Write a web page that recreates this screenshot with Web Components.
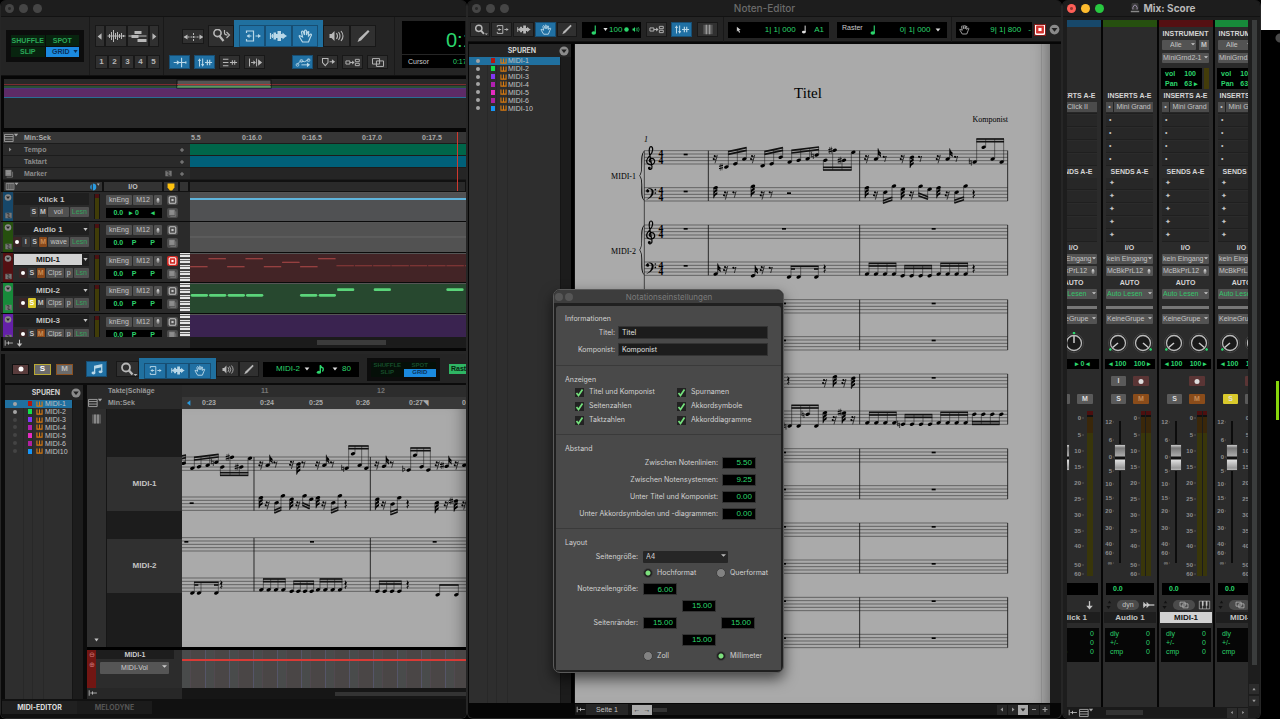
<!DOCTYPE html>
<html lang="de">
<head>
<meta charset="utf-8">
<title>Mix: Score</title>
<style>
  html, body {
    margin: 0;
    height: 100%;
    background: #000;
    overflow: hidden;
  }
  body {
    font: 7px/10px "Liberation Sans", Arial, sans-serif;
    color: #c4c4c4;
  }
</style>
</head>
<body>
<daw-desktop></daw-desktop>

<script>
// ---------- shared styles and icons ----------
const base = `
  * { box-sizing: border-box; }
  button, input, select { font: inherit; color: inherit; margin: 0; padding: 0; border: 0; border-radius: 0; outline: 0; }
  button { display: flex; align-items: center; justify-content: center; background: none; white-space: nowrap; overflow: hidden; }
  svg { display: block; flex: none; }
  .row { display: flex; }
  .grow { flex: 1; min-width: 0; }
`;

const icons = {
  left: `<path d="M12 3v8L7 7z" fill="currentColor"/>`,
  right: `<path d="M8 3v8l5-4z" fill="currentColor"/>`,
  mag: `<circle cx="8.500" cy="5.500" r="4" fill="none" stroke="currentColor" stroke-width="1.800"/><path d="M11 8l4 4.500" stroke="currentColor" stroke-width="2.400"/><path d="M16 12h4l-2 2z" fill="currentColor"/>`,
  magArrow: `<circle cx="6" cy="4" r="3.600" fill="none" stroke="currentColor" stroke-width="1.600"/><path d="M8 7l4 5" stroke="currentColor" stroke-width="2.200"/><path d="M13 1v3q0 2 3 2M15 3l3 3-3 3" fill="none" stroke="currentColor" stroke-width="1.200"/>`,
  trim: `<path d="M4 4V2h7v10H4v-2M5 7h4M13 7h3" fill="none" stroke="currentColor" stroke-width="1.200"/><path d="M7 5L4 7l3 2zM15.500 5l3 2-3 2z" fill="currentColor"/>`,
  select: `<path d="M2 4v6M4 5v4M2 7h16" stroke="currentColor" stroke-width="1.200"/><path d="M5 3.500h2.500V5H9V2h3.500v3H14V3.500L18 7l-4 3.500V9h-1.500v3H9V9H7.500v1.500H5z" fill="currentColor"/>`,
  hand: `<path d="M7 13L4 8q-1-2 1-1l2 1-1-5q1-2 2 0l1 3V2q1-2 2 0v4l1-3q2-1 1 1v3l2-2q2 0 0 3l-2 5z" fill="none" stroke="currentColor" stroke-width="1.200"/>`,
  speaker: `<path d="M3 5h2l3-3v10L5 9H3z" fill="currentColor"/><path d="M10 4q2 3 0 6M12 3q3 4 0 8M14.500 2q4 5 0 10" fill="none" stroke="currentColor" stroke-width="1.100"/>`,
  pencil: `<path d="M4 13l1.500-3.500 9-8.500 1.500 1.500-8.500 9z" fill="currentColor"/>`,
  spread: `<path d="M1 7h18M10 3v8" stroke="currentColor" stroke-dasharray="2 1"/><path d="M4 4.500v5L0 7zM16 4.500v5L20 7z" fill="currentColor"/>`,
  wave: `<path d="M1 7h18M3 5v4M5 3v8M7 1v12M9 4v6M11 3v8M13 5v4M15 4v6M17 6v2" stroke="currentColor"/>`,
  blocks: `<path d="M6 2h7v3H6zM3 6h7v3H3zM9 10h9v3H9z" fill="currentColor"/><path d="M0 7h18" stroke="currentColor"/>`,
  tab: `<path d="M2 7h16M12 1v12" stroke="currentColor" stroke-width="1.400"/><path d="M6 4l4 3-4 3zM18 5v4l-3-2z" fill="currentColor"/>`,
  link: `<path d="M3 12V3M7 2v9M10 7h9" stroke="currentColor" stroke-width="1.300"/><path d="M1 5l2-3.500L5 5zM5 9l2 3.500L9 9z" fill="currentColor"/><path d="M13 3.500v7M16 3.500v7" stroke="currentColor" stroke-width="1.500"/>`,
  lines: `<path d="M1 3h7M1 7h7M1 11h7M10 7h9M13 4v6M16 4v6" stroke="currentColor" stroke-width="1.300"/>`,
  insert: `<path d="M3 2v10M5 7h5M12 2v10" stroke="currentColor" stroke-width="1.200"/><path d="M8 4l3 3-3 3zM14 3l5 4-5 4z" fill="currentColor"/>`,
  auto: `<path d="M2 10l5-5 5 1 6-3M8 10h8" fill="none" stroke="currentColor" stroke-width="1.200"/><circle cx="3" cy="10" r="1.800" fill="none" stroke="currentColor"/><circle cx="8" cy="5" r="1.800" fill="none" stroke="currentColor"/><circle cx="17" cy="4" r="1.800" fill="none" stroke="currentColor"/><path d="M15 7l4 3-4 3z" fill="currentColor"/>`,
  marker: `<path d="M3 2h7v5l-3.500 4L3 7zM12 6h5" fill="none" stroke="currentColor" stroke-width="1.300"/><path d="M15 3l4 3-4 3z" fill="currentColor"/>`,
  shield: `<path d="M4 1h12v7l-4 5H8L4 8z" fill="currentColor"/>`,
  mirror: `<path d="M1 5h5v4H1zM6 7h5M13 3h5v3h-5zM13 8h5v3h-5z" fill="none" stroke="currentColor" stroke-width="1.200"/><path d="M9 4.500L12 7l-3 2.500z" fill="currentColor"/>`,
  layer: `<path d="M3 2h9v7H3zM8 5h9v7H8z" fill="none" stroke="currentColor" stroke-width="1.200"/>`,
  page: `<path d="M4 1h12v12H4z" fill="#555"/><path d="M8 1v12M12 1v12" stroke="#999" stroke-width="2"/>`,
  note: `<path d="M7 11V3l9-2v9" fill="none" stroke="currentColor" stroke-width="1.600"/><ellipse cx="5.500" cy="11.500" rx="2.500" ry="1.800" fill="currentColor"/><ellipse cx="14.500" cy="10" rx="2.500" ry="1.800" fill="currentColor"/><path d="M7 3l9-2v3L7 6z" fill="currentColor"/>`,
  quarter: `<path d="M11 11V1" stroke="currentColor" stroke-width="1.500"/><ellipse cx="9" cy="11" rx="3" ry="2.200" fill="currentColor"/>`,
  eighth: `<path d="M9 11V1q1 3 4 4 1 3-1 5" fill="none" stroke="currentColor" stroke-width="2"/><ellipse cx="7" cy="11" rx="3" ry="2.200" fill="currentColor"/>`,
  cursor: `<path d="M7 2v9l2-2 2 4 2-1-2-4h3z" fill="currentColor"/>`,
  down: `<path d="M4 3h12l-6 8z" fill="currentColor"/>`,
  up: `<path d="M6 10h8l-4-6z" fill="currentColor"/>`,
  record: `<circle cx="10" cy="7" r="5" fill="currentColor"/>`,
  target: `<rect x="4" y="1" width="12" height="12" rx="2" fill="none" stroke="currentColor" stroke-width="2"/><rect x="8" y="5" width="4" height="4" fill="currentColor"/>`,
  stack: `<rect x="4" y="1" width="10" height="10" fill="#888"/><path d="M6 13h10V4M6 4h6M6 7h6" fill="none" stroke="#999"/>`,
  menu: `<path d="M1 2h12v10H1zM1 5h12M1 8.500h12" fill="none" stroke="#999" stroke-width="1.400"/><path d="M14 1h6l-3 4z" fill="#aaa"/>`,
  cols: `<path d="M1 2h12v10H1zM4 2v10M7 2v10M10 2v10" fill="none" stroke="#999" stroke-width="1.400"/><path d="M14 1h6l-3 4z" fill="#aaa"/>`,
  clock: `<path d="M8 1a6 6 0 0 1 0 12V7zM6 2a6 6 0 0 0 0 10z" fill="#2a9be0"/><path d="M15 1h5l-2.500 4z" fill="#aaa"/>`,
  circle: `<circle cx="10" cy="7" r="6.500" fill="#8a8a8a"/><path d="M6 5h8l-4 5z" fill="#222"/>`,
  keys: `<path d="M4 1v11h12V1M10 1v11" fill="none" stroke="currentColor" stroke-width="2.600"/>`,
  piano: `<path d="M2 1h16v12H2zM7 1v12M13 1v12" fill="none" stroke="currentColor"/><path d="M6 1h2.500v7H6zM12 1h2.500v7H12z" fill="currentColor"/>`,
  arrowDown: `<path d="M10 1v10" stroke="currentColor" stroke-width="2"/><path d="M5 8h10l-5 6z" fill="currentColor"/>`,
  audio: `<path d="M2 2v10l5-5zM7 2v10l5-5z" fill="currentColor"/><path d="M2 7h17" stroke="currentColor" stroke-width="2"/>`,
  pin: `<circle cx="10" cy="4" r="3" fill="currentColor"/><path d="M10 4v9M6 8h8" stroke="currentColor" stroke-width="2"/>`,
  pinned: `<path d="M4 2v10M6 7h12M10 4v6" stroke="currentColor" stroke-width="1.500"/>`,
  plus: `<path d="M5 7h10M10 2v10" stroke="currentColor" stroke-width="2.400"/>`,
  minus: `<path d="M6 7h8" stroke="currentColor" stroke-width="2"/>`,
  fold: `<path d="M3 1h14v12H3z" fill="#777"/><path d="M6 3h5v4M14 11H9V7" fill="none" stroke="#333" stroke-width="2"/>`,
  app: `<rect x="5" y="0" width="10" height="10" rx="2" fill="#3a3a3a"/><path d="M7 9V6l2-3h2l2 3v3" fill="none" stroke="#a99bb8" stroke-width="1.300"/><path d="M4 12h12" stroke="#888" stroke-width="2"/>`
};

function icon(name, w = 14, h = 10, color = "currentColor") {
  return `<svg width="${w}" height="${h}" viewBox="0 0 20 14" style="color:${color}" aria-hidden="true">${icons[name]}</svg>`;
}

// ---------- window frame ----------
class AppWindow extends HTMLElement {
  constructor() {
    super();
    const el = this.attachShadow({ mode: "open" });
    const live = this.hasAttribute("live");
    const colors = live ? ["#fe5f57", "#febc2e", "#28c840"] : ["#454545", "#454545", "#454545"];
    const badge = live ? icon("app", 14, 10) : "";
    el.innerHTML = `
      <style>${base}
        :host { display: flex; flex-direction: column; min-width: 0; min-height: 0; overflow: hidden;
          background: #060606; border: solid #262626; border-width: 0 1px 1px; border-radius: 6px; }
        header { display: grid; grid-template-columns: 1fr auto 1fr; align-items: center; flex: none;
          height: var(--bar, 17px); background: #1d1d1d; border-bottom: 1px solid #121212;
          font: 500 10px/14px Inter, sans-serif; color: ${live ? "#b8b8b8" : "#6b6b6b"}; }
        .title { display: flex; align-items: center; gap: 2px; ${live ? "font-weight:700" : ""} }
        .dots { display: flex; gap: 5px; padding-left: 4px; }
        .dots i { width: 9px; height: 9px; border-radius: 50%; }
        .dots i:first-child { background-image: radial-gradient(#0006 1px, transparent 2px); }
      </style>
      <header><span class="dots">${colors.map((c) => `<i style="background-color:${c}"></i>`).join("")}</span>
      <span class="title">${badge}${this.getAttribute("heading") || ""}</span></header>
      <slot></slot>`;
  }
}
customElements.define("app-window", AppWindow);

// ---------- toolbar button ----------
class ToolButton extends HTMLElement {
  constructor() {
    super();
    const el = this.attachShadow({ mode: "open" });
    const name = this.getAttribute("icon");
    const size = this.hasAttribute("big") ? [21, 14] : [16, 11];
    el.innerHTML = `
      <style>${base}
        :host { display: flex; flex: none; width: 21px; }
        button { width: 100%; height: 100%; background: #303030; border: 1px solid #181818; color: #b8b8b8;
          font-weight: 700; font-size: 8px; }
        :host([on]) button { background: #2070a3; border-color: #174e73; color: #b9d8e8; }
        :host([red]) button { background: #d3332f; border-color: #801c1a; color: #fff; }
      </style>
      <button type="button" ${name ? `aria-label="${name}"` : ""}>${name ? icon(name, ...size) : "<slot></slot>"}</button>`;
  }
}
customElements.define("tool-button", ToolButton);

// ---------- shuffle / slip / spot / grid ----------
class ModeGrid extends HTMLElement {
  constructor() {
    super();
    const el = this.attachShadow({ mode: "open" });
    el.innerHTML = `
      <style>${base}
        :host { display: grid; grid-template-columns: 1fr 1fr; gap: 1px; padding: 5px; background: #0c0c0c; width: 78px; height: 32px; flex: none; }
        button { background: #08240f; color: #2ba758; font: 700 7px/9px "Liberation Sans", sans-serif; }
        .on { background: #1b8ae0; color: #0b2f57; gap: 2px; padding-left: 6px; }
        :host([dim]) { width: 73px; height: 23px; padding: 4px; gap: 0; }
        :host([dim]) button { font-size: 6px; line-height: 7px; background: #050f08; color: #174d2a; }
        :host([dim]) .on { background: #1b8ae0; color: #0b2f57; padding: 0; }
      </style>
      <button>SHUFFLE</button><button>SPOT</button><button>SLIP</button>
      <button class="on">GRID${this.hasAttribute("dim") ? "" : icon("down", 7, 5)}</button>`;
  }
}
customElements.define("mode-grid", ModeGrid);

// ---------- list of tracks ----------
class TrackList extends HTMLElement {
  constructor() {
    super();
    const el = this.attachShadow({ mode: "open" });
    const colors = ["#b3160e", "#13e04a", "#8237f5", "#b020b0", "#e62cc0", "#b020a0", "#1795f5"];
    const last = this.getAttribute("last");
    const shown = Number(this.getAttribute("shown"));
    const rows = colors.map((c, i) => `
      <li class="${i === 0 ? "on" : ""}"><i class="dot" style="${i < shown ? "" : "background:#444"}"></i>
      <i class="swatch" style="background:${c}"></i>${icon("keys", 9, 6, "#d87a10")}<span>${i < 6 ? `MIDI-${i + 1}` : last}</span></li>`).join("");
    el.innerHTML = `
      <style>${base}
        :host { display: grid; grid-template-columns: 1fr 11px; grid-template-rows: auto 1fr; background: #2e2e2e; min-height: 0; }
        header { grid-column: 1 / 3; display: flex; align-items: center; justify-content: flex-end; height: var(--head, 15px);
          background: #242424; color: #d0d0d0; font: 700 7px/10px Inter, sans-serif; }
        header span { flex: 1; text-align: center; padding-left: 18px; }
        ul { list-style: none; margin: 0; padding: 0; height: 55px; display: grid; grid-auto-rows: 1fr; }
        .list { background: linear-gradient(90deg, transparent 18px, #282828 18px 19px, transparent 19px 27px, #282828 27px 28px, transparent 28px 38px, #282828 38px 39px, transparent 39px); }
        li { display: grid; grid-template-columns: var(--cols, 20px 9px 9px 1fr); align-items: center; justify-items: center; font-size: 7px; line-height: 7px; }
        li span { justify-self: start; }
        li.on { background: #20709f; }
        .dot { width: 4px; height: 4px; border-radius: 50%; background: #a5a5a5; }
        .swatch { width: 4px; height: 5px; }
        .bar { background: #1c1c1c; border-left: 1px solid #151515; }
      </style>
      <header><span>SPUREN</span>${icon("circle", 14, 10)}</header>
      <div class="list"><ul>${rows}</ul></div><div class="bar"></div>`;
  }
}
customElements.define("track-list", TrackList);

// ---------- notation ----------
// All score coordinates are in thirds of a pixel.
const head = (x, y) => `<ellipse cx="${x}" cy="${y}" rx="7" ry="4.800" transform="rotate(-18 ${x} ${y})"/>`;
const line = (x1, y1, x2, y2, w = 2) => `<path d="M${x1} ${y1}L${x2} ${y2}" stroke="#111" stroke-width="${w}"/>`;

function beam(points, y1, y2, count = 2) {
  const up = y1 < points[0][1];
  const side = up ? 6 : -6;
  const x1 = points[0][0] + side;
  const x2 = points[points.length - 1][0] + side;
  let out = "";
  for (const [x, y] of points) {
    const end = y1 + ((x + side - x1) / (x2 - x1)) * (y2 - y1);
    out += head(x, y) + line(x + side, y, x + side, end, 1.5);
  }
  for (let i = 0; i < count; i++) {
    const d = i * (up ? 8 : -8);
    out += line(x1 - 1, y1 + d, x2 + 1, y2 + d, 5);
  }
  return out;
}
const run = (x, y, top, step = 27, n = 4) =>
  beam(Array.from({ length: n }, (_, i) => [x + i * step, y]), top, top);

const up = (x, y) => head(x, y) + line(x + 6, y, x + 6, y - 32) +
  `<path d="M${x + 6} ${y - 32}q2 8 9 13q-1 3 0 6q-7-5-9-6zM${x + 6} ${y - 22}q2 6 9 11l0 6q-6-7-9-7z"/>`;
const dn = (x, y) => head(x, y) + line(x - 6, y, x - 6, y + 32) +
  `<path d="M${x - 6} ${y + 32}q3-9 11-12v-7q-8 5-11 8zM${x - 6} ${y + 21}q3-8 11-11v-7q-8 4-11 8z"/>`;
const r16 = (x, y) => `<circle cx="${x - 3}" cy="${y - 7}" r="3"/><circle cx="${x - 6}" cy="${y + 2}" r="3"/>` +
  `<path d="M${x - 4} ${y - 5}q6 1 9-4L${x - 2} ${y + 15}M${x - 6} ${y + 4}q6 1 8-3" fill="none" stroke="#000" stroke-width="2"/>`;
const r8 = (x, y) => `<circle cx="${x - 3}" cy="${y - 5}" r="3"/><path d="M${x - 3} ${y - 3}q5 1 8-4L${x} ${y + 11}" fill="none" stroke="#000" stroke-width="2"/>`;
const r4 = (x, y) => `<path d="M${x - 3} ${y - 15}l7 9q-6 6 1 12-7-2-4 8-9-8 0-10l-5-7q5-5 1-12z"/>`;
const rest = (x, y) => `<rect x="${x - 6}" y="${y - 3}" width="12" height="5"/>`;
const sharp = (x, y) => `<path d="M${x - 2} ${y - 10}v21M${x + 3} ${y - 11}v21" stroke="#000" stroke-width="1.500"/><path d="M${x - 6} ${y - 2}l12-3M${x - 6} ${y + 5}l12-3" stroke="#000" stroke-width="3"/>`;
const nat = (x, y) => `<path d="M${x - 3} ${y - 11}v16l6-2M${x + 3} ${y + 11}v-15l-6 2" fill="none" stroke="#000" stroke-width="2"/>`;
const flat = (x, y) => `<path d="M${x - 4} ${y - 13}v18q9-4 7-9-3-3-7 1" fill="none" stroke="#000" stroke-width="2"/>`;
const staff = (x1, x2, y) => [0, 1, 2, 3, 4].map((i) => line(x1, y + i * 10, x2, y + i * 10, 1.4)).join("");
const dotted = (a, b, c, y, top) => beam([[a, y], [b, y], [c, y]], top, top, 1) +
  line(a + 6, top + 8, a + 18, top + 8, 5) + line(c - 7, top + 8, c + 6, top + 8, 5);

const treble = (x, y) => `<path transform="translate(${x} ${y})" fill="none" stroke="#000" stroke-width="3.600" stroke-linecap="round"
  d="M0 14c-7-1-7-11 1-12 10-1 13 11 7 16-8 7-22 2-21-9 1-12 18-17 18-33 0-5-2-9-5-9-5 0-6 10-5 17l8 43c1 9-9 11-10 5"/><circle cx="${x - 5}" cy="${y + 31}" r="4"/>`;
const bass = (x, y) => `<path transform="translate(${x} ${y})" d="M-13 0c0-9 22-12 22 4 0 13-13 20-23 24 10-7 17-14 17-24 0-12-11-10-13-5z"/><circle cx="${x - 9}" cy="${y + 1}" r="4.500"/><circle cx="${x + 14}" cy="${y - 3}" r="2.500"/><circle cx="${x + 14}" cy="${y + 7}" r="2.500"/>`;
const brace = (x, y) => `<path transform="translate(${x} ${y})" d="M13 0c-18 14-1 56-15 75 14 19-3 61 15 75-12-17 0-59-13-75C12 59 1 17 13 0z"/>`;
const time = (x, y) => `<text x="${x}" y="${y + 20}" class="time">4</text><text x="${x}" y="${y + 40}" class="time">4</text>`;

const passages = {
  page() {
    let out = line(283, 92, 283, 1584);
    for (let i = 0; i < 7; i++) {
      const y = Math.round(92 + i * 223.4);
      out += staff(283, 1373, y) + staff(283, 1373, y + 111);
      for (const x of [475, 929, 1373]) out += line(x, y, x, y + 151, 2.5);
      out += brace(270, y) + treble(303, y + 21) + bass(302, y + 120);
      if (i < 2) out += time(333, y) + time(333, y + 111);
      out += rest(407, y + 12) + rest(407, y + 123);
      if (i !== 0 && i !== 3) out += rest(702, y + 12) + rest(1151, y + 12);
      if (i > 1 && i !== 3) out += rest(702, y + 123) + rest(1151, y + 123);
    }
    out += r16(497, 115) + sharp(513, 141) + beam([[529, 141], [556, 131], [583, 117]], 95, 83);
    out += r16(609, 115) + beam([[638, 137], [665, 131], [692, 112]], 95, 83);
    out += beam([[719, 126], [746, 121], [773, 116], [800, 105]], 91, 81) + nat(787, 106);
    out += beam([[826, 121], [854, 91], [882, 121], [910, 97]], 150, 150) + sharp(841, 91) + sharp(869, 121);
    out += r16(951, 115) + up(978, 117) + r8(1004, 115) + r16(1058, 115) + dn(1086, 112) + r8(1110, 115);
    out += r16(1166, 115) + up(1193, 117) + r8(1218, 115) + nat(1261, 126);
    out += beam([[1274, 126], [1301, 82], [1328, 117], [1355, 126]], 57, 57);
    out += dn(497, 203) + r16(528, 224) + r8(553, 222) + dn(609, 199) + r16(638, 224) + r8(662, 222) + rest(717, 220);
    out += dn(951, 203) + r16(978, 224) + beam([[1006, 217], [1032, 198]], 250, 240) + dn(1059, 208) + r16(1086, 224);
    out += beam([[1112, 199], [1139, 208]], 227, 238) + dn(1166, 203) + r16(1193, 224) + beam([[1220, 217], [1247, 198]], 249, 239) + r4(1271, 222);
    out += up(497, 462) + r16(528, 448) + r8(553, 448) + up(609, 467) + r16(638, 448) + r8(662, 448);
    out += dotted(717, 746, 799, 471, 439) + r4(824, 446);
    out += run(951, 462, 430) + run(1058, 467, 437) + run(1166, 462, 430) + r4(1271, 446);
    // fourth system pair
    out += `<g transform="translate(690 720)">` + r4(25, 62) + r16(135, 67) + dn(165, 50) + r16(193, 67) + dn(220, 55) + rest(461, 54);
    out += nat(15, 198) + beam([[29, 198], [56, 198], [83, 163], [109, 198]], 136, 136) + nat(69, 163);
    out += dn(135, 158) + r16(164, 178) + sharp(179, 157) + dn(192, 159) + r16(220, 178);
    out += run(262, 188, 157) + nat(356, 193) + run(369, 193, 164) + run(476, 188, 157) + run(583, 163, 193) + `</g>`;
    return `<path d="M466.500 0v2000" stroke="#8c8c8c"/><g transform="translate(-25 76) scale(.33333)">${out}</g>
      <text x="233" y="54" text-anchor="middle" font-size="15">Titel</text>
      <text x="433" y="78" text-anchor="end" font-size="8">Komponist</text>
      <text x="69" y="98" font-size="8" font-style="italic">1</text>
      <text x="61" y="135" text-anchor="end" font-size="8">MIDI-1</text>
      <text x="61" y="210" text-anchor="end" font-size="8">MIDI-2</text>`;
  },
  strip() {
    let out = "";
    for (const y of [327, 447, 569, 690]) out += staff(540, 3000, y);
    for (const x of [762, 1111]) out += line(x, 327, x, 488, 2.5) + line(x, 570, x, 730, 2.5);
    out += head(551, 346) + line(556, 346, 556, 320) + line(540, 325, 558, 321, 5) + line(540, 333, 558, 329, 5);
    out += beam([[577, 361], [597, 356], [623, 352], [649, 343]], 328, 319) + nat(637, 343);
    out += beam([[667, 357], [696, 328], [724, 357], [750, 331]], 382, 382) + sharp(683, 328) + sharp(710, 357);
    out += r16(784, 350) + up(803, 352) + r8(826, 348) + r16(876, 348) + dn(896, 348) + r8(910, 348);
    out += r16(954, 350) + up(973, 352) + r8(996, 348) + nat(1028, 361) + beam([[1040, 361], [1059, 317], [1079, 352], [1099, 361]], 294, 294);
    out += r16(1132, 350) + up(1152, 355) + r8(1175, 348) + flat(1212, 366) + beam([[1226, 366], [1245, 322], [1265, 356], [1285, 366]], 300, 300);
    out += r16(1313, 350) + sharp(1326, 352) + up(1340, 355) + r16(1370, 350) + head(1393, 352);
    out += rest(575, 466) + dn(783, 449) + r16(803, 470) + beam([[830, 464], [849, 443]], 495, 486) + dn(875, 454) + r16(895, 470);
    out += beam([[914, 443], [934, 454]], 472, 482) + dn(954, 449) + r16(973, 470) + beam([[1000, 464], [1020, 443]], 495, 486) + r4(1037, 468);
    out += dn(1132, 454) + r16(1152, 470) + beam([[1178, 468], [1198, 449]], 500, 492) + r4(1223, 468);
    out += dn(1311, 464) + r16(1340, 470) + sharp(1353, 459) + dn(1368, 459) + r16(1393, 470);
    out += `<g transform="translate(0 540)">` + rest(559, 42) + rest(936, 42) + rest(1304, 42);
    out += dotted(577, 597, 649, 195, 163) + r4(664, 170) + run(784, 185, 153, 22) + run(875, 190, 160, 20) + run(954, 185, 153, 22);
    out += r4(1037, 170) + run(1132, 190, 160, 22) + r4(1223, 170) + beam([[1313, 200], [1369, 200]], 171, 171, 1) + `</g>`;
    return `<g transform="translate(-182 -61) scale(.33333)">${out}</g>`;
  }
};

class NoteScore extends HTMLElement {
  constructor() {
    super();
    const el = this.attachShadow({ mode: "open" });
    el.innerHTML = `
      <style>
        :host { display: block; min-width: 0; min-height: 0; overflow: hidden; background: #aaaaaa; box-shadow: inset -14px 0 16px -12px #0006; }
        svg { display: block; width: 100%; height: 100%; font-family: "Liberation Serif", serif; }
        .time { font-size: 29px; font-weight: 700; text-anchor: middle; }
      </style>
      <svg>${passages[this.getAttribute("passage")]()}</svg>`;
  }
}
customElements.define("note-score", NoteScore);

// ---------- one track of the edit window ----------
class EditTrack extends HTMLElement {
  constructor() {
    super();
    const el = this.attachShadow({ mode: "open" });
    const kind = this.getAttribute("kind");
    const name = this.getAttribute("name");
    const midi = kind === "midi";
    const solo = this.hasAttribute("solo");
    const mute = solo || kind === "click" ? "" : "mute";
    const view = { click: "vol", audio: "wave", midi: "Clps" }[kind];
    el.innerHTML = `
      <style>${base}
        :host { display: grid; grid-template-columns: 10px 76px 15px 60px 16px 10px 1fr; padding-left: 2px; min-height: 0;
          background: #2a2a2a; border-bottom: 1px solid #0a0a0a; overflow: hidden; }
        .color { background: ${this.getAttribute("color")}; display: flex; flex-direction: column; justify-content: space-between; align-items: center; padding: 2px 0; }
        .name { display: flex; align-items: center; height: 12px; margin: 1px 0 0 1px; background: #1f1f1f; font: 700 8px/12px "Liberation Sans", sans-serif; }
        .name b { flex: 1; text-align: center; height: 11px; line-height: 11px; }
        :host([selected]) .name b { background: #d2d2d2; color: #111; }
        .ctl { display: flex; justify-content: flex-end; gap: 1px; margin-top: 2px; height: 10px; }
        .ctl button, .io button { background: #505050; border-radius: 1px; padding: 0 2px; height: 10px; }
        .ctl .s { background: #383838; font-weight: 700; width: 8px; padding: 0; }
        .ctl .rec { background: #3a2526; color: #fff; width: 8px; padding: 0; }
        .ctl .mute { background: #8a4a1c; color: #c98c55; }
        .ctl .solo { background: #d8c62a; color: #fff; }
        .ctl .view { min-width: ${midi ? 16 : 21}px; }
        .ctl .auto { color: #33a35c; min-width: ${midi ? 10 : 16}px; }
        .meter { margin: 2px 4px 2px 5px; background: linear-gradient(#4a1111 4px, #403c08 4px); border: solid #151515; border-width: 0 1px; }
        .io { padding: 3px 1px 2px 2px; display: grid; grid-template-columns: 26px 20px 8px; gap: 3px 1px; align-content: start; }
        .lcd { grid-column: 1 / 4; display: grid; grid-template-columns: 1fr 1fr 1fr; height: 10px; background: #000; color: #2bd56c; font-weight: 700; text-align: center; }
        .lcd span:first-child { padding-left: 6px; }
        .side { padding: 3px 1px; display: grid; gap: 3px; justify-items: center; align-content: start; }
        .side button { width: 11px; height: 10px; border-radius: 2px; background: #4c4c4c; }
        :host([selected]) .side button:first-child { background: #cf2a25; color: #fff; }
        .keys { background: ${midi ? "repeating-linear-gradient(#e5e5e5 0 1px, #666 1px 2px, #e5e5e5 2px 4px, #444 4px 6px)" : "#2a2a2a"}; }
        .lane { background: ${this.getAttribute("lane")}; overflow: hidden; border-top: 1px solid #555; }
      </style>
      <div class="color">${icon("circle", 10, 7)}${icon("fold", 9, 7)}</div>
      <div><div class="name"><b>${name}</b>${kind === "click" ? "" : icon("down", 7, 5)}</div>
        <div class="ctl">
          ${kind === "click" ? "" : `<button class="rec" aria-label="Aufnahme">${icon("record", 8, 6)}</button>`}
          ${kind === "audio" ? `<button class="s">I</button>` : ""}
          <button class="s ${solo ? "solo" : ""}">S</button><button class="s ${mute}">M</button>
          <button class="view">${view}</button>${midi ? "<button>p</button>" : ""}<button class="auto">${midi ? "Lsn" : "Lesn"}</button>
        </div></div>
      <div class="meter"></div>
      <div class="io"><button>knEng</button><button>M12</button><button aria-label="Fader">${icon("pin", 8, 7)}</button>
        <div class="lcd"><span>0.0</span><span>${kind === "click" ? "▸ 0" : "P"}</span><span>${kind === "click" ? "◂" : "P"}</span></div></div>
      <div class="side"><button aria-label="Ziel">${icon("target", 11, 8)}</button><button aria-label="Playlist">${icon("stack", 11, 8)}</button></div>
      <div class="keys"></div>
      <div class="lane"><svg width="100%" height="30"><g transform="scale(.33333)">${this.clips()}</g></svg></div>`;
  }

  clips() {
    const bar = (x, y, w, h, c) => `<rect x="${x}" y="${y}" width="${w}" height="${h}" rx="${h / 2}" fill="${c}"/>`;
    switch (this.getAttribute("clips")) {
      case "click":
        return `<rect y="15" width="3000" height="6" fill="#5fb4dc"/>`;
      case "audio":
        return `<path d="M0 42h3000" stroke="#666" stroke-width="3"/>`;
      case "red":
        return [[0, 37], [55, 13], [111, 37], [166, 13], [221, 37], [276, 23], [330, 37], [384, 13]].map(([x, y]) => bar(x, y, 53, 3, "#b34a4a")).join("") +
          Array.from({ length: 8 }, (_, i) => bar(439 + i * 55, 34, 53, 3, "#8e3a3a")).join("");
      case "green":
        return [[2, 30], [57, 30], [113, 30], [168, 30], [330, 30], [386, 30], [441, 13], [551, 13], [769, 13]].map(([x, y]) => bar(x, y, 52, 8, "#5bd47a")).join("");
    }
    return "";
  }
}
customElements.define("edit-track", EditTrack);

// ---------- edit window: tools, overview, rulers and tracks ----------
class EditPanel extends HTMLElement {
  constructor() {
    super();
    const el = this.attachShadow({ mode: "open" });
    el.innerHTML = `
      <style>${base}
        :host { display: block; flex: none; }
        .tools { display: flex; height: 59px; background: #242424; border-bottom: 1px solid #111; overflow: hidden; }
        .tools > div { flex: none; border-right: 1px solid #191919; padding: 3px 5px 0; }
        .tools .mode { width: 89px; padding: 13px 5px 0; }
        .line { display: flex; align-items: flex-end; height: 27px; margin-bottom: 8px; }
        .line tool-button { height: 22px; }
        .line.low { height: 14px; gap: 4px; }
        .low tool-button { height: 14px; }
        .group { display: flex; padding: 5px 5px 0; height: 27px; background: #20709f; }
        .counter { display: flex; flex-direction: column; flex: 1 !important; margin: 4px 0 7px 7px; padding: 0 !important; background: #000; color: #2bd56c; overflow: hidden; }
        .big { height: 34px; font: 20px/38px "Liberation Sans", sans-serif; padding-left: 44px; border-bottom: 1px solid #262626; white-space: nowrap; }
        .cur { display: flex; gap: 24px; padding: 2px 6px; white-space: nowrap; }
        .cur span { color: #ccc; }
        .overview { display: block; width: calc(100% - 3px); height: 49px; margin: 3px 0 4px 3px; background: #282828; }
        .rulers { position: relative; display: grid; grid-template-columns: 187px 1fr; margin-left: 2px; grid-auto-rows: 12px; font-weight: 700; color: #8c8c8c; border-bottom: 1px solid #111; background: #252525; }
        .rulers > div { border-bottom: 1px solid #1c1c1c; }
        /* playhead over the rulers */
        .rulers::after { content: ""; position: absolute; left: 454px; top: 0; width: 1px; height: 59px; background: #d0382e; }
        .lab { display: grid; grid-template-columns: 21px 1fr 14px 12px; align-items: center; background: #2a2a2a; }
        .lab.top, .ticks { background: #363636; color: #aaa; }
        .ticks { display: grid; grid-template-columns: 51px repeat(3, 60px) 1fr; line-height: 12px; overflow: hidden; padding-left: 1px; white-space: nowrap; }
        .heads { display: grid; grid-template-columns: 100px 60px 16px 10px 1fr; height: 11px; margin-left: 2px; background: #1b1b1b; font-weight: 700; text-align: center; }
        .heads > * { background: #333; border: 1px solid #111; display: flex; align-items: center; line-height: 9px; }
        .clip { height: 145px; overflow: hidden; }
        .tracks { height: 152px; display: grid; grid-auto-rows: 1fr; }
        .foot { display: grid; grid-template-columns: 187px 1fr; height: 11px; margin-left: 2px; background: #1b1b1b; }
        .foot .row { background: #2a2a2a; align-items: center; }
        .thumb { width: 69px; height: 5px; margin: 3px 0 0 127px; background: #3b3b3b; }
      </style>
      <div class="tools">
        <div class="mode"><mode-grid></mode-grid></div>
        <div style="width:74px"><div class="line">
          <tool-button icon="left" style="width:10px"></tool-button><tool-button icon="wave" style="width:22px" big></tool-button>
          <tool-button icon="blocks" style="width:22px" big></tool-button><tool-button icon="right" style="width:10px"></tool-button></div>
          <div class="line low" style="gap:0">${[1, 2, 3, 4, 5].map((n) => `<tool-button style="width:13px">${n}</tool-button>`).join("")}</div></div>
        <div style="width:231px"><div class="line" style="padding-left:13px">
          <tool-button icon="spread" style="height:15px;width:22px;margin:0 4px 3px 0" big></tool-button><tool-button icon="magArrow" style="width:26px" big></tool-button>
          <div class="group"><tool-button icon="trim" on big style="width:26px"></tool-button><tool-button icon="select" on big style="width:27px"></tool-button><tool-button icon="hand" on big style="width:26px"></tool-button></div>
          <tool-button icon="speaker" style="width:27px" big></tool-button><tool-button icon="pencil" style="width:26px" big></tool-button></div>
          <div class="line low"><tool-button icon="tab" on></tool-button><tool-button icon="link" on></tool-button><tool-button icon="lines"></tool-button><tool-button icon="insert"></tool-button>
          <tool-button icon="auto" on style="margin-left:23px"></tool-button><tool-button icon="marker"></tool-button><tool-button icon="mirror"></tool-button><tool-button icon="layer"></tool-button></div></div>
        <div class="counter"><div class="big">0:17</div><div class="cur"><span>Cursor</span>0:17</div></div>
      </div>
      <svg class="overview">
        <path d="M0 5.500h2000" stroke="#7a2d30"/><path d="M0 8h2000" stroke="#2c7a40"/><rect y="9" width="2000" height="9" fill="#5d2b66"/>
        <path d="M0 9.500h2000" stroke="#4a3480"/><path d="M0 18.500h2000" stroke="#2a6d94"/><rect x="173" y="1" width="94" height="8" fill="#8887" stroke="#111"/>
        <path d="M173 5.500h94" stroke="#b03a34"/><path d="M173 8h94" stroke="#63c469"/></svg>
      <div class="rulers">
        <div class="lab top">${icon("menu", 16, 10)}<span>Min:Sek</span></div><div class="ticks"><span>5.5</span><span>0:16.0</span><span>0:16.5</span><span>0:17.0</span><span>0:17.5</span></div>
        <div class="lab">${icon("right", 14, 7)}<span>Tempo</span><i></i>${icon("plus", 8, 6)}</div><div style="background:#00664a"></div>
        <div class="lab"><i></i><span>Taktart</span><i></i>${icon("plus", 8, 6)}</div><div style="background:#006079"></div>
        <div class="lab">${icon("stack", 12, 9)}<span>Marker</span>${icon("fold", 9, 7)}${icon("plus", 8, 6)}</div><div></div>
      </div>
      <div class="heads"><div style="justify-content:space-between">${icon("cols", 16, 9)}${icon("clock", 16, 8)}</div><div style="justify-content:center">I/O</div>
        <div style="justify-content:center">${icon("shield", 12, 8, "#ffc20e")}</div><div></div><div style="background:#2a2a2a"></div></div>
      <div class="clip"><div class="tracks">
        <edit-track name="Klick 1" kind="click" color="#17486a" lane="#505153" clips="click"></edit-track>
        <edit-track name="Audio 1" kind="audio" color="#26500f" lane="#525252" clips="audio"></edit-track>
        <edit-track name="MIDI-1" kind="midi" color="#541012" lane="#432426" clips="red" selected></edit-track>
        <edit-track name="MIDI-2" kind="midi" color="#178a3a" lane="#27482f" clips="green" solo></edit-track>
        <edit-track name="MIDI-3" kind="midi" color="#6420a8" lane="#3a2350"></edit-track>
      </div></div>
      <div class="foot"><div class="row">${icon("pinned", 11, 8)}${icon("arrowDown", 11, 8)}</div><div><div class="thumb"></div></div></div>`;
  }
}
customElements.define("edit-panel", EditPanel);

// ---------- MIDI editor docked below the tracks ----------
class MidiEditor extends HTMLElement {
  constructor() {
    super();
    const el = this.attachShadow({ mode: "open" });
    el.innerHTML = `
      <style>${base}
        :host { display: flex; flex-direction: column; flex: 1; min-height: 0; margin-top: 3px; padding-left: 4px; border-top: 3px solid #262626; background: #0b0b0b; }
        .tools { display: flex; height: 29px; flex: none; background: #242424; align-items: center; overflow: hidden; white-space: nowrap; padding-top: 1px; }
        .tools > * { flex: none; }
        .tools tool-button { height: 16px; }
        .b { width: 17px; height: 11px; border: 1px solid #111; background: #6b6b6b; font: 700 8px/10px "Liberation Sans"; margin-right: 5px; color: #fff; }
        .group { display: flex; align-items: center; align-self: stretch; margin: 3px 0 4px; padding: 4px 5px 0; background: #20709f; }
        .lcd { display: flex; align-items: center; justify-content: space-between; width: 96px; height: 15px; background: #000; color: #2bd56c; padding: 0 8px 0 13px; margin: 0 3px 0 4px; font-size: 8px; }
        .raster { background: #2fb564; color: #08240f; font-weight: 700; margin-left: 9px; padding: 0 2px; }
        .main { flex: 1; min-height: 0; display: grid; grid-template-columns: 78px 1fr; gap: 4px; margin-top: 2px; }
        track-list { --cols: 20px 9px 11px 1fr; }
        .right { display: grid; grid-template-columns: 20px 75px 1fr; grid-template-rows: 24px 1fr 41px 11px; min-width: 0; min-height: 0; }
        .rlab { grid-column: 1 / 3; display: grid; grid-template-columns: 21px 1fr; font-weight: 700; line-height: 12px; background: #2a2a2a; color: #999; align-items: center; }
        .rule { display: grid; grid-template-rows: 12px 12px; overflow: hidden; background: #383838; font-weight: 700; line-height: 12px; color: #aaa; white-space: nowrap; }
        .rule div { display: grid; grid-template-columns: 20px 58px 49px 47px 53px 53px 1fr; }
        .rule div:first-child { grid-template-columns: 79px 116px 1fr; background: #2c2c2c; color: #777; }
        .side { background: #2e2e2e; border-right: 1px solid #161616; display: flex; flex-direction: column; justify-content: space-between; align-items: center; padding: 4px 0; }
        .names { background: #1c1c1c; display: flex; flex-direction: column; gap: 28px; padding-top: 48px; font: 700 8px/54px "Liberation Sans"; text-align: center; overflow: hidden; }
        .names div { height: 54px; flex: none; background: #303030; }
        .cc { grid-column: 1 / 3; border-top: 3px solid #000; display: grid; grid-template-columns: 9px 78px 8px; background: linear-gradient(90deg, #721613 9px, #2c2c2c 9px); color: #ccc; }
        .cc b { line-height: 9px; display: block; text-align: center; background: #1d1d1d; }
        .cc select { appearance: none; display: block; width: 69px; height: 12px; margin: 3px 4px; text-align-last: center; border-radius: 1px;
          background: url('data:image/svg+xml,<svg xmlns="http://www.w3.org/2000/svg" viewBox="0 0 6 4"><path d="M0 0h6L3 3z" fill="%23ccc"/></svg>') right 2px top 3px / 5px 4px no-repeat #555; }
        .red { display: flex; flex-direction: column; align-items: center; color: #c77; }
        .lane { border-top: 3px solid #000; background: linear-gradient(#d93a35, #d93a35) 0 9px / 100% 2px no-repeat, repeating-linear-gradient(90deg, #494b4b 0 8px, #51494f 8px 9px, #4a4646 9px 23px, #555568 23px 24px); }
        .foot { grid-column: 1 / 3; background: #272727; }
        .scroll { background: #161616; padding: 4px 0 3px 153px; }
        .scroll i { display: block; height: 4px; background: #333; }
        nav { display: flex; flex: none; height: 19px; padding-top: 2px; background: #111; font: 700 7px/12px Inter, sans-serif; margin-left: -3px; }
        nav button { width: 75px; height: 13px; background: #202020; color: #ddd; font: inherit; }
        nav button + button { background: #1b1b1b; color: #555; }
      </style>
      <div class="tools">
        <button class="b" style="margin-left:7px;background:#5a3c3c" aria-label="Aufnahme">${icon("record", 10, 8)}</button>
        <button class="b" style="border-color:#b8a834">S</button><button class="b" style="border-color:#8a5020;color:#bbb">M</button>
        <tool-button icon="note" on style="margin:0 9px 0 8px"></tool-button>
        <tool-button icon="mag" big style="width:23px"></tool-button>
        <div class="group"><tool-button icon="trim" on style="width:22px"></tool-button><tool-button icon="select" on style="width:23px"></tool-button><tool-button icon="hand" on style="width:22px"></tool-button></div>
        <tool-button icon="speaker" style="width:23px"></tool-button><tool-button icon="pencil" style="width:20px"></tool-button>
        <div class="lcd"><span>MIDI-2</span>${icon("down", 8, 6, "#ddd")}${icon("eighth", 14, 11)}${icon("down", 8, 6, "#ddd")}<span>80</span></div>
        <mode-grid dim style="margin-left:5px"></mode-grid><span class="raster">Raster</span>
      </div>
      <div class="main">
        <track-list last="MIDI10" shown="2"></track-list>
        <div class="right">
          <div class="rlab"><i></i><span>Takte|Schläge</span>${icon("menu", 16, 10)}<span>Min:Sek</span></div>
          <div class="rule"><div><i></i><span>11</span><span>12</span></div>
            <div>${icon("left", 14, 12, "#2a9be0")}<span>0:23</span><span>0:24</span><span>0:25</span><span>0:26</span><span>0:27◥</span><span>0:28</span></div></div>
          <div class="side">${icon("page", 15, 12)}${icon("down", 7, 6)}</div>
          <div class="names"><div>MIDI-1</div><div>MIDI-2</div></div>
          <note-score passage="strip"></note-score>
          <div class="cc"><div class="red"><span>⊖</span><span>⊕</span></div><div><b>MIDI-1</b><select aria-label="Controller"><option>MIDI-Vol</option></select></div><div></div></div>
          <div class="lane"></div>
          <div class="foot">${icon("pinned", 11, 10)}</div><div class="scroll"><i></i></div>
        </div>
      </div>
      <nav><button>MIDI-EDITOR</button><button>MELODYNE</button></nav>`;
  }
}
customElements.define("midi-editor", MidiEditor);

// ---------- score editor ----------
class ScoreEditor extends HTMLElement {
  constructor() {
    super();
    const el = this.attachShadow({ mode: "open" });
    el.innerHTML = `
      <style>${base}
        :host { display: flex; flex-direction: column; flex: 1; min-height: 0; }
        .tools { display: flex; align-items: center; height: 25px; flex: none; background: #242424; border-bottom: 1px solid #111; white-space: nowrap; padding: 1px 0 0 2px; gap: 1px; }
        .tools > * { flex: none; }
        .tools tool-button { height: 15px; }
        .lcd { display: flex; align-items: center; justify-content: space-between; height: 16px; background: #000; color: #2bd56c; padding: 0 5px; margin-left: 4px; font-size: 8px; }
        .lcd small { font-size: 7px; color: #ccc; margin-top: -4px; }
        .sep { width: 1px; height: 25px; background: #181818; margin-left: 4px; }
        .main { flex: 1; min-height: 0; display: grid; grid-template-columns: 106px 1fr 11px; margin-top: 2px; }
        .main > track-list { margin: 0 0 0 1px; border-right: 3px solid #000; --head: 13px; --cols: 18px 11px 10px 1fr; }
        .vbar { background: #1c1c1c; }
        .foot { display: flex; align-items: center; height: 11px; flex: none; margin: 1px 11px 3px 107px; background: #161616; }
        .foot span { background: #262626; width: 42px; text-align: center; line-height: 11px; }
        .foot button { width: 10px; height: 10px; background: #262626; color: #999; margin-left: 1px; }
        .foot .lit { background: #aaa; color: #222; margin: 0; }
        .foot .bar { width: 14px; height: 4px; margin-left: 1px; background: #333; }
        note-score { border-left: 1px solid #111; }
      </style>
      <div class="tools">
        <tool-button icon="mag" style="width:20px"></tool-button><tool-button icon="trim"></tool-button><tool-button icon="select"></tool-button><tool-button icon="hand" on></tool-button><tool-button icon="pencil" style="width:20px"></tool-button>
        <div class="lcd" style="width:59px">${icon("quarter", 15, 12)}${icon("down", 7, 5, "#ddd")}<span>100</span>${icon("record", 9, 9)}${icon("speaker", 10, 9)}</div>
        <tool-button icon="mirror" style="margin:0 3px 0 4px"></tool-button><tool-button icon="link" on></tool-button><tool-button icon="page" style="margin-left:4px"></tool-button>
        <div class="sep"></div>
        <div class="lcd" style="width:101px;margin-left:3px">${icon("cursor", 11, 9, "#ccc")}<span style="margin-left:18px">1| 1| 000</span>${icon("quarter", 13, 11, "#ddd")}<span>A1</span></div>
        <div class="lcd" style="width:110px;margin-left:7px"><small>Raster</small>${icon("quarter", 15, 12)}<span style="margin-left:15px">0| 1| 000</span>${icon("down", 8, 6, "#ddd")}</div>
        <div class="sep" style="margin-left:3px"></div>
        <div class="lcd" style="width:76px;margin-left:3px;padding:0 1px">${icon("hand", 15, 11, "#aaa")}<span style="margin-left:11px">9| 1| 800</span><span>-</span></div>
        <tool-button icon="target" red style="width:12px;height:12px;margin-left:1px"></tool-button>
        ${icon("circle", 15, 11)}
      </div>
      <div class="main"><track-list last="MIDI-10" shown="7"></track-list><note-score passage="page"></note-score><div class="vbar"></div></div>
      <div class="foot">${icon("pinned", 11, 9)}<span>Seite 1</span><button class="lit" style="margin-left:4px" aria-label="Zurück">←</button><button class="lit" aria-label="Weiter">→</button><i class="bar"></i><i class="grow"></i>
        <button aria-label="Links">${icon("left", 10, 7)}</button><button aria-label="Rechts">${icon("right", 10, 7)}</button><button class="lit" aria-label="Menü">${icon("down", 8, 6)}</button><button aria-label="Kleiner">${icon("minus", 10, 7)}</button><button aria-label="Größer">${icon("plus", 10, 7)}</button></div>`;
  }
}
customElements.define("score-editor", ScoreEditor);

// ---------- notation settings dialog ----------
class NotationSettings extends HTMLElement {
  constructor() {
    super();
    const el = this.attachShadow({ mode: "open" });
    const checks = ["Titel und Komponist", "Spurnamen", "Seitenzahlen", "Akkordsymbole", "Taktzahlen", "Akkorddiagramme"];
    const gaps = [["Zwischen Notenlinien:", "5.50"], ["Zwischen Notensystemen:", "9.25"], ["Unter Titel und Komponist:", "0.00"], ["Unter Akkordsymbolen und -diagrammen:", "0.00"]];
    el.innerHTML = `
      <style>${base}
        :host { display: block; box-sizing: border-box; background: #202020; border: 1px solid #5a5a5a; border-radius: 7px; padding-bottom: 2px; box-shadow: 0 6px 14px #0009; font: 7px/10px Inter, sans-serif; color: #d2d2d2; }
        header { display: flex; align-items: center; height: 13px; gap: 2px; padding-left: 1px; background: #3d3d3d; border-radius: 6px 6px 0 0; color: #7b7b7b; font-size: 8px; margin-bottom: 3px; }
        header i { width: 8px; height: 8px; border-radius: 50%; background: #565656; }
        header span { flex: 1; text-align: center; padding-right: 20px; }
        section { margin: 0 2px; padding: 9px 0 6px; background: #494949; border-top: 1px solid #3a3a3a; }
        section:first-of-type { border-top: 0; padding: 8px 0 7px; border-radius: 3px 3px 0 0; }
        h2 { font: inherit; margin: 0 0 0 9px; height: 10px; }
        .f { display: grid; grid-template-columns: 59px 150px; gap: 3px; height: 17px; align-items: center; text-align: right; }
        input[type=text] { height: 12px; width: 100%; background: #000; border: 1px solid #333; color: #2bd56c; text-align: right; padding: 0 3px; font: 8px/10px "Liberation Sans", sans-serif; }
        .f input[type=text] { height: 13px; background: #1c1c1c; color: #e0e0e0; text-align: left; font: inherit; }
        .checks { display: grid; grid-template-columns: 102px 1fr; grid-auto-rows: 14px; padding: 0 0 1px 19px; }
        .checks label, .radio { display: flex; align-items: center; gap: 5px; }
        input[type=checkbox] { appearance: none; width: 9px; height: 9px; background: #222; display: grid; place-items: center; }
        input[type=checkbox]:checked { background: url('data:image/svg+xml,<svg xmlns="http://www.w3.org/2000/svg" viewBox="0 0 9 9"><path d="M1.500 5l2 2.500 4-6" fill="none" stroke="%2374e07c" stroke-width="1.700"/></svg>') #222; }
        .v { display: grid; grid-template-columns: 162px 34px; gap: 4px; height: 17px; align-items: center; text-align: right; }
        .l { display: grid; grid-template-columns: 82px 34px 34px 34px; column-gap: 5px; grid-template-rows: 17px 16px 16px 17px 17px 17px 16px; align-items: center; }
        .l > label:not(.radio), .l > .cap { grid-column: 1; text-align: right; }
        select { appearance: none; grid-column: 2 / 5; width: 85px; height: 12px; background: url('data:image/svg+xml,<svg xmlns="http://www.w3.org/2000/svg" viewBox="0 0 6 4"><path d="M0 0h6L3 3z" fill="%23bbb"/></svg>') 78px 3px / 5px 4px no-repeat #262626; padding-left: 3px; border-radius: 1px; }
        .radio { white-space: nowrap; gap: 4px; }
        .radio.a { grid-column: 2; }
        .radio.b { grid-column: 4; margin-left: -5px; }
        input[type=radio] { appearance: none; flex: none; width: 10px; height: 10px; border-radius: 50%; background: #828282; border: 1px solid #3c3c3c; }
        input[type=radio]:checked { background: radial-gradient(#7de07d 2px, #202020 3px); }
      </style>
      <header><i></i><i></i><span>Notationseinstellungen</span></header>
      <section><h2>Informationen</h2>
        <div class="f"><label for="titel">Titel:</label><input type="text" id="titel" value="Titel"></div>
        <div class="f"><label for="komp">Komponist:</label><input type="text" id="komp" value="Komponist"></div></section>
      <section><h2>Anzeigen</h2><div class="checks">${checks.map((c) => `<label><input type="checkbox" checked>${c}</label>`).join("")}</div></section>
      <section><h2>Abstand</h2>${gaps.map(([t, v], i) => `<div class="v"><label for="g${i}">${t}</label><input type="text" id="g${i}" value="${v}"></div>`).join("")}</section>
      <section><h2>Layout</h2><div class="l">
        <label for="size">Seitengröße:</label><select id="size"><option>A4</option></select>
        <label class="radio a"><input type="radio" name="o" checked>Hochformat</label><label class="radio b"><input type="radio" name="o">Querformat</label>
        <label for="nz">Notenzeilengröße:</label><input type="text" id="nz" value="6.00">
        <input type="text" aria-label="Oben" value="15.00" style="grid-area:4/3">
        <span class="cap" style="grid-row:5">Seitenränder:</span><input type="text" aria-label="Links" value="15.00" style="grid-area:5/2"><input type="text" aria-label="Rechts" value="15.00" style="grid-area:5/4">
        <input type="text" aria-label="Unten" value="15.00" style="grid-area:6/3">
        <label class="radio a" style="grid-row:7"><input type="radio" name="u">Zoll</label><label class="radio b" style="grid-row:7"><input type="radio" name="u" checked>Millimeter</label>
      </div></section>`;
  }
}
customElements.define("notation-settings", NotationSettings);

// ---------- mixer channel ----------
class MixStrip extends HTMLElement {
  constructor() {
    super();
    const el = this.attachShadow({ mode: "open" });
    const kind = this.getAttribute("kind");
    const click = kind === "click";
    const midi = kind === "midi";
    const solo = this.hasAttribute("solo");
    const texts = (list, x) => list.map(([t, y]) => `<text x="${x}" y="${y + 2}">${t}</text><path d="M${x + 1} ${y}h2" stroke="#555"/>`).join("");
    const gain = [[12, 14], [6, 32], [0, 49], [5, 63], [10, 76], [15, 90], [20, 103], [30, 120], [40, 136], [60, 145], ["∞", 155]];
    const level = [[0, 10], [5, 27], [10, 43], [15, 59], [20, 75], [25, 91], [30, 107], [35, 123], [40, 138], [50, 157], [60, 166]];
    const knob = (a) => `<svg width="22" height="22" viewBox="-11 -11 22 22"><circle r="9.500" fill="#222" stroke="#444"/><circle r="7.500" fill="#1a1a1a" stroke="#bbb" stroke-width="1.300"/>
      <path d="M0 0V-7" stroke="#ccc" stroke-width="1.500" transform="rotate(${a})"/><circle cy="-10" r="1.300" fill="#2bd56c" transform="rotate(${a})"/></svg>`;
    const slots = (mark) => Array.from({ length: 5 }, (_, i) => `<div class="slot">${mark === "•" && i === 0
      ? `<button class="ins"><i>•</i><span>${click ? "Click II" : "Mini Grand"}</span></button>` : mark}</div>`).join("");
    el.innerHTML = `
      <style>${base}
        :host { display: flex; flex-direction: column; flex: none; width: 54px; background: #2b2b2b; overflow: hidden; }
        :host > * { flex: none; }
        h3 { font: 700 7px/12px "Liberation Sans", sans-serif; margin: 0; text-align: center; color: #d5d5d5; }
        .color { height: 7px; background: ${this.getAttribute("color")}; }
        .pad { padding: 0 4px 0 3px; }
        .inst { height: 63px; padding-top: 1px; }
        .inst select, .sel { appearance: none; display: block; width: 47px; height: 10px; border-radius: 1px; font-size: 7px; padding-left: 1px; overflow: hidden;
          background: url('data:image/svg+xml,<svg xmlns="http://www.w3.org/2000/svg" viewBox="0 0 6 4"><path d="M0 0h6L3 3z" fill="%23ccc"/></svg>') right 1px top 3px / 4px 3px no-repeat #535353; }
        .m { width: 10px; height: 10px; background: #535353; font-weight: 700; }
        .lcd { background: #000; color: #2bd56c; font-weight: 700; }
        .vp { width: 41px; height: 21px; padding: 1px 4px; display: grid; grid-template-columns: 1fr auto; line-height: 9px; margin-left: -1px; }
        .slots { height: 76px; }
        .slot { height: 12px; margin-bottom: 1px; padding-left: 3px; background: #272727; line-height: 10px; border-bottom: 1px solid #1f1f1f; }
        .ins { width: 47px; height: 10px; margin-left: -3px; background: #4b4b4b; justify-content: flex-start; }
        .ins i { width: 8px; border-right: 1px solid #222; font-style: normal; }
        .ins span { flex: 1; }
        .io { height: 35px; }
        .auto { height: 24px; }
        .auto .sel { color: #35c46b; }
        .group { height: 26px; padding-top: 5px; }
        .group i { display: block; height: 3px; background: #777; margin-bottom: 5px; width: 47px; }
        .knobs { height: 31px; display: flex; justify-content: center; align-items: center; gap: 3px; }
        .pan { display: flex; justify-content: space-around; height: 10px; margin: 1px 2px 2px; white-space: nowrap; }
        .btns { height: 18px; display: grid; grid-template-columns: 15px 16px; gap: 7px; padding: 5px 8px 0; }
        .btns button { height: 10px; background: #5a5a5a; font: 700 7px/10px "Liberation Sans"; color: #ddd; border-radius: 1px; }
        .btns .rec { background: #5a3535; }
        .btns .mute { background: #8a4c1a; color: #c78d58; }
        .btns .solo { background: #d9c92b; }
        .fader { height: 172px; margin-top: 1px; display: grid; grid-template-columns: 11px 11px 16px 10px; }
        .fader svg text { font: 700 6px "Liberation Sans", sans-serif; fill: #8e8e8e; text-anchor: end; }
        input[type=range] { appearance: none; writing-mode: vertical-lr; direction: rtl; width: 12px; height: 142px; margin-top: 13px; background: linear-gradient(90deg, transparent 5px, #0c0c0c 5px 7px, transparent 7px); }
        input[type=range]::-webkit-slider-thumb { appearance: none; width: 12px; height: 27px; border: 1px solid #333; border-radius: 1px;
          background: linear-gradient(#ccc 0, #777 3px, #aaa 11px, #111 12px, #111 14px, #e0e0e0 15px, #999 23px, #bbb); }
        .meter { margin: 3px ${click ? 2 : 0}px 4px; background: linear-gradient(90deg, transparent 45%, #1c1c1c 45% 55%, transparent 55%), linear-gradient(#4c0f0f 4px, #111 4px 6px, #3a270a 6px 22px, #39360a 22px); }
        .vol { height: 12px; margin: 3px 3px; padding: 1px 7px; line-height: 10px; }
        .icons { height: 13px; display: flex; align-items: center; justify-content: space-around; }
        .pill { background: #4b4b4b; border-radius: 5px; width: 22px; height: 10px; }
        .name { height: 11px; margin: 1px 1px 5px; background: #1e1e1e; font: 700 8px/11px "Liberation Sans"; text-align: center; }
        :host([selected]) .name { background: #d2d2d2; color: #111; }
        .dly { height: 34px; margin: 0 2px; padding: 1px 5px; display: grid; grid-template-columns: 1fr auto; line-height: 9px; background: #060606; align-content: start; }
      </style>
      <div class="color"></div>
      <div class="inst pad">${midi ? `<h3>INSTRUMENT</h3>
        <div class="row" style="gap:3px;margin-bottom:3px"><select aria-label="Ansicht" style="width:34px;padding-left:8px"><option>Alle</option></select><button class="m">M</button></div>
        <select aria-label="Instrument"><option>MiniGrnd2-1</option></select>
        <div class="row" style="gap:2px;margin-top:5px"><div class="lcd vp"><span>vol</span><span>100</span><span>Pan</span><span>63 ▸</span></div><div style="width:5px;background:#433c0a"></div></div>` : ""}</div>
      <div class="slots pad"><h3>INSERTS A-E</h3>${slots("•")}</div>
      <div class="slots pad"><h3>SENDS A-E</h3>${slots("✦")}</div>
      <div class="io pad"><h3>I/O</h3><select class="sel" aria-label="Eingang" style="margin-bottom:2px"><option>kein Eingang</option></select>
        <button class="sel" style="background:#535353;display:flex;justify-content:space-between">McBkPrL12${icon("pin", 8, 7)}</button></div>
      <div class="auto pad"><h3>AUTO</h3><select class="sel" aria-label="Automation"><option>Auto Lesen</option></select></div>
      <div class="group pad"><i></i><select class="sel" aria-label="Gruppe"><option>KeineGrupe</option></select></div>
      <div class="knobs">${click ? knob(0) : knob(-130) + knob(130)}</div>
      <div class="pan lcd">${click ? `<span></span><span>▸ 0 ◂</span>` : "<span>◂ 100</span><span>100 ▸</span>"}</div>
      <div class="btns">${kind === "audio" ? "<button>I</button>" : "<i></i>"}${click ? "" : `<button class="rec" aria-label="Aufnahme">${icon("record", 10, 7)}</button>`}</div>
      <div class="btns"><button class="${solo ? "solo" : ""}">S</button><button class="${click || solo ? "" : "mute"}">M</button></div>
      <div class="fader"><svg width="11" height="172">${texts(gain, 9)}</svg><input type="range" value="80" aria-label="Lautstärke"><svg width="16" height="172">${texts(level, 12)}</svg><div class="meter"></div></div>
      <div class="vol lcd">0.0</div>
      <div class="icons"><span style="color:#111">${icon("up", 9, 6)}${icon("down", 7, 5)}</span>${click ? "<i></i>" : `<button class="pill" aria-label="Typ">${midi ? icon("layer", 12, 8) : "dyn"}</button>`}${icon(click ? "arrowDown" : midi ? "piano" : "audio", 13, 10)}</div>
      <div class="name">${this.getAttribute("name")}</div>
      <div class="dly lcd" style="font-weight:400"><span>dly</span><span>0</span><span>+/-</span><span>0</span><span>cmp</span><span>0</span></div>`;
  }
}
customElements.define("mix-strip", MixStrip);

class MixPanel extends HTMLElement {
  constructor() {
    super();
    const el = this.attachShadow({ mode: "open" });
    el.innerHTML = `
      <style>${base}
        :host { display: grid; grid-template-columns: 1fr 12px; grid-template-rows: 1fr 11px; flex: 1; min-height: 0; padding: 3px 0 0 4px; background: #1d1d1d; }
        .strips { display: flex; gap: 2px; overflow: hidden; background: #050505; min-width: 0; min-height: 0; }
        mix-strip:first-child { margin-left: -20px; }
        .v { display: flex; flex-direction: column; align-items: center; gap: 2px; padding-bottom: 1px; }
        .v i { flex: 1; width: 5px; background: #3a3c3c; margin-bottom: 17px; }
        button { width: 10px; height: 10px; background: #2c2c2c; color: #999; }
        .h { display: flex; align-items: center; background: #1a1a1a; }
        .h i { width: 37px; height: 5px; margin-left: 12px; background: #333; }
      </style>
      <div class="strips">
        <mix-strip name="Klick 1" kind="click" color="#17486a"></mix-strip>
        <mix-strip name="Audio 1" kind="audio" color="#26500f"></mix-strip>
        <mix-strip name="MIDI-1" kind="midi" color="#541012" selected></mix-strip>
        <mix-strip name="MIDI-2" kind="midi" color="#178a3a" solo></mix-strip>
      </div>
      <div class="v"><i></i><button aria-label="Hoch">${icon("up", 8, 6)}</button><button aria-label="Runter">${icon("down", 6, 4)}</button></div>
      <div class="h">${icon("pinned", 11, 9)}${icon("menu", 16, 10)}<i></i><span class="grow"></span><button aria-label="Links">${icon("left", 8, 7)}</button><button aria-label="Rechts" style="margin-left:1px">${icon("right", 8, 7)}</button></div>`;
  }
}
customElements.define("mix-panel", MixPanel);

// ---------- desktop ----------
class DawDesktop extends HTMLElement {
  constructor() {
    super();
    const el = this.attachShadow({ mode: "open" });
    el.innerHTML = `
      <style>
        :host { display: grid; grid-template-columns: 467fr 595fr 199fr 19fr; height: 100vh; position: relative; }
        app-window:first-child { --bar: 22px; border-left-width: 0; border-radius: 6px 0 0 6px; }
        .edge { display: flex; flex-direction: column; background: radial-gradient(circle at 100% 38px, #4a4a4a 4px, #000 5px); }
        .edge b { height: 30px; background: #fff; }
        .edge i { width: 3px; height: 39px; margin: 351px 1px 0 auto; background: #86d50c; }
        /* floating dialog above the windows */
        notation-settings { position: absolute; left: 553px; top: 289px; width: 231px; }
      </style>
      <app-window><edit-panel></edit-panel><midi-editor></midi-editor></app-window>
      <app-window heading="Noten-Editor"><score-editor></score-editor></app-window>
      <app-window heading="Mix: Score" live><mix-panel></mix-panel></app-window>
      <div class="edge"><b></b><i></i></div>
      <notation-settings></notation-settings>`;
  }
}
customElements.define("daw-desktop", DawDesktop);
</script>
</body>
</html>
